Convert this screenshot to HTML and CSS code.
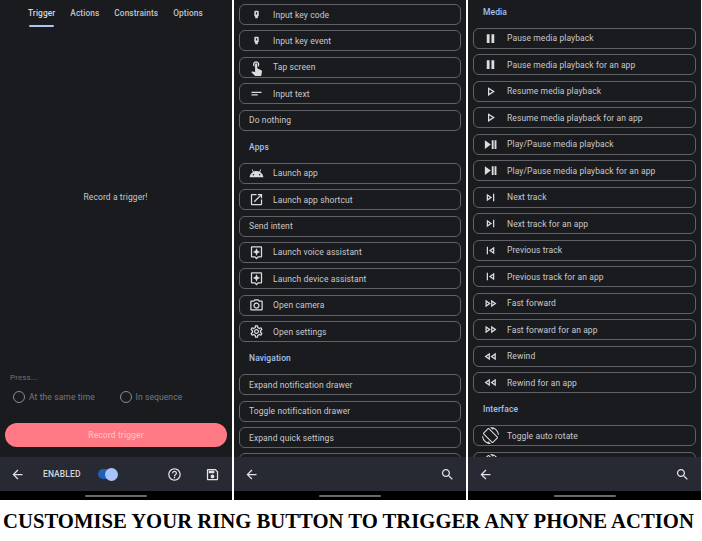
FILE: index.html
```html
<!DOCTYPE html>
<html lang="en">
<head>
    <meta charset="UTF-8">
    <meta name="viewport" content="width=device-width, initial-scale=1.0">
    <title>Customise your ring button</title>
    <link rel="stylesheet" href="styles.css">
</head>
<body>
    <!-- icon sprite -->
    <svg class="sprite" xmlns="http://www.w3.org/2000/svg">
        <symbol id="i-key" viewBox="0 0 24 24"><path fill-rule="evenodd" d="M10 6h4a1.500 1.500 0 0 1 1.500 1.500V14l-1.500 1.500V18h-4v-2.500L8.500 14V7.500A1.500 1.500 0 0 1 10 6zM11 8.500v3.500h2V8.500z"/></symbol>
        <symbol id="i-touch" viewBox="0 0 24 24"><path d="M9 11.240V7.500C9 6.120 10.120 5 11.500 5S14 6.120 14 7.500v3.740c1.210-.81 2-2.180 2-3.740C16 5.010 13.990 3 11.500 3S7 5.010 7 7.500c0 1.560.79 2.930 2 3.740zm9.840 4.630l-4.540-2.260c-.17-.07-.35-.11-.54-.11H13v-6c0-.83-.67-1.500-1.500-1.500S10 6.670 10 7.500v10.740l-3.430-.72c-.08-.01-.15-.03-.24-.03-.31 0-.59.13-.79.33l-.79.8 4.940 4.940c.27.27.65.44 1.060.44h6.790c.75 0 1.330-.55 1.440-1.280l.75-5.270c.01-.07.02-.14.02-.2 0-.62-.38-1.160-.91-1.380z"/></symbol>
        <symbol id="i-text" viewBox="0 0 24 24"><path d="M4 9h16v2H4zm0 4h10v2H4z"/></symbol>
        <symbol id="i-android" viewBox="0 0 24 24"><path d="M17.600 9.480l1.840-3.180c.16-.31.04-.69-.26-.85-.29-.15-.65-.06-.83.22l-1.880 3.240c-2.860-1.210-6.080-1.210-8.940 0L5.650 5.670c-.19-.29-.58-.38-.87-.2-.28.18-.37.54-.22.83L6.400 9.480C3.300 11.250 1.280 14.440 1 18h22c-.28-3.560-2.300-6.750-5.400-8.520zM7 15.250c-.69 0-1.250-.56-1.250-1.250s.56-1.250 1.250-1.250 1.250.56 1.250 1.250-.56 1.250-1.250 1.250zm10 0c-.69 0-1.250-.56-1.250-1.250s.56-1.250 1.250-1.250 1.250.56 1.250 1.250-.56 1.250-1.250 1.250z"/></symbol>
        <symbol id="i-shortcut" viewBox="0 0 24 24"><path d="M19 19H5V5h7V3H5c-1.110 0-2 .9-2 2v14c0 1.100.89 2 2 2h14c1.100 0 2-.9 2-2v-7h-2v7zM14 3v2h3.590l-9.830 9.830 1.410 1.410L19 6.410V10h2V3h-7z"/></symbol>
        <symbol id="i-assistant" viewBox="0 0 24 24"><path d="M19 2H5c-1.100 0-2 .9-2 2v14c0 1.100.9 2 2 2h4l3 3 3-3h4c1.100 0 2-.9 2-2V4c0-1.100-.9-2-2-2zm0 16h-4.830L12 20.170 9.830 18H5V4h14v14zm-7-1l1.880-4.120L18 11l-4.120-1.880L12 5l-1.880 4.120L6 11l4.120 1.880z"/></symbol>
        <symbol id="i-camera" viewBox="0 0 24 24"><path d="M20 4h-3.170L15 2H9L7.170 4H4c-1.100 0-2 .9-2 2v12c0 1.100.9 2 2 2h16c1.100 0 2-.9 2-2V6c0-1.100-.9-2-2-2zm0 14H4V6h4.050l1.830-2h4.240l1.830 2H20v12zM12 7c-2.760 0-5 2.240-5 5s2.240 5 5 5 5-2.240 5-5-2.240-5-5-5zm0 8c-1.650 0-3-1.350-3-3s1.350-3 3-3 3 1.350 3 3-1.350 3-3 3z"/></symbol>
        <symbol id="i-settings" viewBox="0 0 24 24"><path d="M19.430 12.980c.04-.32.07-.64.07-.98 0-.34-.03-.66-.07-.98l2.110-1.650c.19-.15.24-.42.12-.64l-2-3.460c-.09-.16-.26-.25-.44-.25-.06 0-.12.01-.17.03l-2.490 1c-.52-.4-1.080-.73-1.690-.98l-.38-2.650C14.460 2.180 14.250 2 14 2h-4c-.25 0-.46.18-.49.42l-.38 2.650c-.61.25-1.170.59-1.690.98l-2.490-1c-.06-.02-.12-.03-.18-.03-.17 0-.34.09-.43.25l-2 3.460c-.13.22-.07.49.12.64l2.110 1.650c-.04.32-.07.65-.07.98 0 .33.03.66.07.98l-2.110 1.650c-.19.15-.24.42-.12.64l2 3.460c.09.16.26.25.44.25.06 0 .12-.01.17-.03l2.490-1c.52.4 1.080.73 1.690.98l.38 2.650c.03.24.24.42.49.42h4c.25 0 .46-.18.49-.42l.38-2.650c.61-.25 1.170-.59 1.690-.98l2.490 1c.06.02.12.03.18.03.17 0 .34-.09.43-.25l2-3.460c.12-.22.07-.49-.12-.64l-2.110-1.650zm-1.980-1.710c.04.31.05.52.05.73 0 .21-.02.43-.05.73l-.14 1.130.89.7 1.080.84-.7 1.210-1.270-.51-1.040-.42-.9.68c-.43.32-.84.56-1.250.73l-1.060.43-.16 1.130-.2 1.350h-1.400l-.19-1.350-.16-1.130-1.060-.43c-.43-.18-.83-.41-1.230-.71l-.91-.7-1.060.43-1.270.51-.7-1.210 1.080-.84.89-.7-.14-1.130c-.03-.31-.05-.54-.05-.74s.02-.43.05-.73l.14-1.130-.89-.7-1.080-.84.7-1.210 1.270.51 1.040.42.9-.68c.43-.32.84-.56 1.250-.73l1.060-.43.16-1.130.2-1.350h1.390l.19 1.350.16 1.130 1.060.43c.43.18.83.41 1.230.71l.91.7 1.060-.43 1.270-.51.7 1.210-1.070.85-.89.7.14 1.130zM12 8c-2.210 0-4 1.790-4 4s1.790 4 4 4 4-1.790 4-4-1.790-4-4-4zm0 6c-1.100 0-2-.9-2-2s.9-2 2-2 2 .9 2 2-.9 2-2 2z"/></symbol>
        <symbol id="i-pause" viewBox="0 0 24 24"><path d="M6 19h4.500V5H6v14zm7.500-14v14H18V5h-4.500z"/></symbol>
        <symbol id="i-play" viewBox="0 0 24 24"><path d="M10 8.640L15.270 12 10 15.360V8.640M8 5v14l11-7L8 5z"/></symbol>
        <symbol id="i-playpause" viewBox="0 0 24 24"><path d="M3 5v14l9.500-7zM14 5h3v14h-3zM18.500 5h3v14h-3z"/></symbol>
        <symbol id="i-next" viewBox="0 0 24 24"><path d="M6 18l8.500-6L6 6v12zM8 9.860L11.030 12 8 14.140V9.860zM16 6h2v12h-2z"/></symbol>
        <symbol id="i-prev" viewBox="0 0 24 24"><path d="M6 6h2v12H6zm3.500 6l8.500 6V6l-8.500 6zm6.500 2.140L12.970 12 16 9.860v4.280z"/></symbol>
        <symbol id="i-forward" viewBox="0 0 24 24"><path d="M4 18l8.500-6L4 6v12zm2-8.140L9.030 12 6 14.140V9.860zM21.500 12L13 6v12l8.500-6zM15 9.860L18.030 12 15 14.140V9.860z"/></symbol>
        <symbol id="i-rewind" viewBox="0 0 24 24"><path d="M11 18V6l-8.500 6 8.500 6zm-2-3.860L5.970 12 9 9.860v4.280zM20.500 18V6L12 12l8.500 6zm-2-3.860L15.470 12l3.030-2.140v4.280z"/></symbol>
        <symbol id="i-rotate" viewBox="0 0 24 24"><path d="M16.480 2.520c3.270 1.550 5.610 4.720 5.970 8.480h1.500C23.440 4.840 18.290 0 12 0l-.66.03 3.810 3.810 1.330-1.320zm-6.250-.77c-.59-.59-1.540-.59-2.120 0L1.750 8.110c-.59.59-.59 1.540 0 2.120l12.020 12.020c.59.59 1.540.59 2.120 0l6.360-6.360c.59-.59.59-1.540 0-2.120L10.230 1.750zm4.600 19.440L2.810 9.170l6.360-6.360 12.020 12.020-6.360 6.360zm-7.310.29C4.250 19.940 1.910 16.760 1.550 13H.05C.56 19.160 5.710 24 12 24l.66-.03-3.810-3.810-1.330 1.320z"/></symbol>
        <symbol id="i-back" viewBox="0 0 24 24"><path d="M20 11H7.830l5.590-5.590L12 4l-8 8 8 8 1.410-1.410L7.830 13H20v-2z"/></symbol>
        <symbol id="i-search" viewBox="0 0 24 24"><path d="M15.500 14h-.79l-.28-.27C15.410 12.590 16 11.110 16 9.500 16 5.910 13.090 3 9.500 3S3 5.910 3 9.500 5.910 16 9.500 16c1.610 0 3.090-.59 4.230-1.570l.27.28v.79l5 4.990L20.490 19l-4.990-5zm-6 0C7.010 14 5 11.990 5 9.500S7.010 5 9.500 5 14 7.010 14 9.500 11.990 14 9.500 14z"/></symbol>
        <symbol id="i-help" viewBox="0 0 24 24"><path d="M11 18h2v-2h-2v2zm1-16C6.480 2 2 6.480 2 12s4.480 10 10 10 10-4.480 10-10S17.520 2 12 2zm0 18c-4.410 0-8-3.590-8-8s3.590-8 8-8 8 3.590 8 8-3.590 8-8 8zm0-14c-2.210 0-4 1.790-4 4h2c0-1.100.9-2 2-2s2 .9 2 2c0 2-3 1.750-3 5h2c0-2.250 3-2.500 3-5 0-2.210-1.790-4-4-4z"/></symbol>
        <symbol id="i-save" viewBox="0 0 24 24"><path d="M17 3H5c-1.110 0-2 .9-2 2v14c0 1.100.89 2 2 2h14c1.100 0 2-.9 2-2V7l-4-4zm2 16H5V5h11.170L19 7.830V19zm-7-7c-1.660 0-3 1.340-3 3s1.340 3 3 3 3-1.340 3-3-1.340-3-3-3zM6 6h9v4H6z"/></symbol>
    </svg>

    <div class="phones">
        <!-- trigger screen -->
        <section class="phone">
            <div class="screen">
                <nav class="tabs">
                    <span class="tab tab-active">Trigger</span>
                    <span class="tab">Actions</span>
                    <span class="tab">Constraints</span>
                    <span class="tab">Options</span>
                </nav>
                <p class="empty">Record a trigger!</p>
                <p class="press">Press...</p>
                <div class="radios">
                    <span class="radio radio-first"><i class="radio-dot"></i>At the same time</span>
                    <span class="radio"><i class="radio-dot"></i>In sequence</span>
                </div>
                <button class="record" type="button">Record trigger</button>
            </div>
            <div class="bar">
                <svg class="bar-icon"><use href="#i-back"/></svg>
                <span class="enabled">ENABLED</span>
                <span class="switch"><i class="switch-thumb"></i></span>
                <svg class="bar-icon help-icon"><use href="#i-help"/></svg>
                <svg class="bar-icon save-icon"><use href="#i-save"/></svg>
            </div>
            <div class="home"><i class="home-line"></i></div>
        </section>

        <!-- action list -->
        <section class="phone">
            <div class="screen list list-actions">
                <div class="row"><svg class="icon"><use href="#i-key"/></svg>Input key code</div>
                <div class="row"><svg class="icon"><use href="#i-key"/></svg>Input key event</div>
                <div class="row"><svg class="icon icon-big"><use href="#i-touch"/></svg>Tap screen</div>
                <div class="row"><svg class="icon"><use href="#i-text"/></svg>Input text</div>
                <div class="row">Do nothing</div>
                <h3 class="label">Apps</h3>
                <div class="row"><svg class="icon"><use href="#i-android"/></svg>Launch app</div>
                <div class="row"><svg class="icon"><use href="#i-shortcut"/></svg>Launch app shortcut</div>
                <div class="row">Send intent</div>
                <div class="row"><svg class="icon"><use href="#i-assistant"/></svg>Launch voice assistant</div>
                <div class="row"><svg class="icon"><use href="#i-assistant"/></svg>Launch device assistant</div>
                <div class="row"><svg class="icon"><use href="#i-camera"/></svg>Open camera</div>
                <div class="row"><svg class="icon"><use href="#i-settings"/></svg>Open settings</div>
                <h3 class="label">Navigation</h3>
                <div class="row">Expand notification drawer</div>
                <div class="row">Toggle notification drawer</div>
                <div class="row">Expand quick settings</div>
                <div class="row"></div>
            </div>
            <div class="bar">
                <svg class="bar-icon"><use href="#i-back"/></svg>
                <svg class="bar-icon search-icon"><use href="#i-search"/></svg>
            </div>
            <div class="home"><i class="home-line"></i></div>
        </section>

        <!-- media list -->
        <section class="phone phone-wide">
            <div class="screen list list-media">
                <h3 class="label">Media</h3>
                <div class="row"><svg class="icon"><use href="#i-pause"/></svg>Pause media playback</div>
                <div class="row"><svg class="icon"><use href="#i-pause"/></svg>Pause media playback for an app</div>
                <div class="row"><svg class="icon"><use href="#i-play"/></svg>Resume media playback</div>
                <div class="row"><svg class="icon"><use href="#i-play"/></svg>Resume media playback for an app</div>
                <div class="row"><svg class="icon"><use href="#i-playpause"/></svg>Play/Pause media playback</div>
                <div class="row"><svg class="icon"><use href="#i-playpause"/></svg>Play/Pause media playback for an app</div>
                <div class="row"><svg class="icon"><use href="#i-next"/></svg>Next track</div>
                <div class="row"><svg class="icon"><use href="#i-next"/></svg>Next track for an app</div>
                <div class="row"><svg class="icon"><use href="#i-prev"/></svg>Previous track</div>
                <div class="row"><svg class="icon"><use href="#i-prev"/></svg>Previous track for an app</div>
                <div class="row"><svg class="icon"><use href="#i-forward"/></svg>Fast forward</div>
                <div class="row"><svg class="icon"><use href="#i-forward"/></svg>Fast forward for an app</div>
                <div class="row"><svg class="icon"><use href="#i-rewind"/></svg>Rewind</div>
                <div class="row"><svg class="icon"><use href="#i-rewind"/></svg>Rewind for an app</div>
                <h3 class="label">Interface</h3>
                <div class="row"><svg class="icon icon-big"><use href="#i-rotate"/></svg>Toggle auto rotate</div>
                <div class="row"><svg class="icon icon-big"><use href="#i-rotate"/></svg></div>
            </div>
            <div class="bar">
                <svg class="bar-icon"><use href="#i-back"/></svg>
                <svg class="bar-icon search-icon"><use href="#i-search"/></svg>
            </div>
            <div class="home"><i class="home-line"></i></div>
        </section>
    </div>

    <h1 class="caption">CUSTOMISE YOUR RING BUTTON TO TRIGGER ANY PHONE ACTION</h1>
</body>
</html>
```

FILE: styles.css
```css
* {
    box-sizing: border-box;
}
body {
    margin: 0;
    background-color: #fff;
    font-family: Roboto, Arial, sans-serif;
    overflow: hidden;
}
.sprite {
    display: none;
}
.phones {
    display: flex;
    gap: 2px;
}
.phone {
    width: 232px;
    height: 500px;
    display: flex;
    flex-direction: column;
    background-color: #1a1b1f;
    color: #c9c9cb;
    font-size: 8.5px;
    letter-spacing: 0.1px;
}
.phone-wide {
    width: 233px;
}
.screen {
    flex: 1;
    min-height: 0;
    overflow: hidden;
    display: flex;
    flex-direction: column;
}

/* Tabs */
.tabs {
    display: flex;
    gap: 15px;
    padding: 8px 0 0 28px;
    flex-shrink: 0;
}
.tab {
    height: 19px;
    font-size: 8.3px;
    font-weight: 500;
    color: #c4c4c6;
}
.tab-active {
    position: relative;
    color: #d8d8da;
}
.tab-active::after {
    content: "";
    position: absolute;
    left: 1px;
    right: 1px;
    bottom: 0;
    height: 2px;
    border-radius: 1px;
    background-color: #a9c5f0;
}
.empty {
    margin: 0;
    flex: 1;
    display: flex;
    align-items: center;
    justify-content: center;
    padding: 0 1px 6px 0;
}
.press {
    margin: 0 0 8px 10px;
    color: #6f7073;
    font-size: 8px;
}
.radios {
    display: flex;
    padding-left: 13px;
    color: #77787b;
}
.radio {
    display: flex;
    align-items: center;
    gap: 4px;
    height: 13px;
}
.radio-first {
    width: 106.5px;
}
.radio-dot {
    width: 12px;
    height: 12px;
    border: 1px solid #8b8c8f;
    border-radius: 50%;
}
.record {
    margin: 20px 5px 10px;
    height: 24px;
    border: none;
    border-radius: 12px;
    background-color: #ff7a85;
    color: #ffb9bd;
    font-family: inherit;
    font-size: 8.5px;
    font-weight: 500;
    letter-spacing: 0.1px;
    flex-shrink: 0;
}

/* Action lists */
.list {
    padding: 0 5px;
}
.list-actions {
    gap: 5.45px;
    padding-top: 4px;
}
.list-media {
    gap: 5.5px;
    padding-top: 1px;
}
.row {
    height: 21px;
    flex-shrink: 0;
    display: flex;
    align-items: center;
    padding-left: 9px;
    border: 1px solid #616265;
    border-radius: 6px;
}
.icon {
    width: 15px;
    height: 15px;
    margin-right: 9px;
    fill: #dcdcde;
    flex-shrink: 0;
}
.icon-big {
    width: 17px;
    height: 17px;
    margin-left: -1px;
    margin-right: 8px;
}
.label {
    margin: 0;
    height: 21px;
    flex-shrink: 0;
    display: flex;
    align-items: center;
    padding-left: 10px;
    font-size: 8.5px;
    font-weight: 500;
    color: #a5c1ee;
}

/* Bottom bar */
.bar {
    height: 34px;
    flex-shrink: 0;
    display: flex;
    align-items: center;
    padding: 0 10px 0 9.5px;
    background-color: #272a33;
}
.bar-icon {
    width: 15px;
    height: 15px;
    fill: #e2e2e4;
    flex-shrink: 0;
}
.enabled {
    margin-left: 18.5px;
    font-weight: 500;
    font-size: 8.5px;
    color: #d6d6d8;
}
.switch {
    position: relative;
    width: 19px;
    height: 10px;
    margin-left: 17px;
    border-radius: 5px;
    background-color: #1f5fb4;
}
.switch-thumb {
    position: absolute;
    right: -1px;
    top: -1.5px;
    width: 13px;
    height: 13px;
    border-radius: 50%;
    background-color: #a8c3fb;
}
.help-icon {
    margin-left: 50.5px;
}
.save-icon {
    margin-left: 23px;
}
.search-icon {
    margin-left: auto;
    margin-right: 1px;
}
.home {
    height: 9px;
    flex-shrink: 0;
    display: flex;
    align-items: center;
    justify-content: center;
    background-color: #000;
}
.home-line {
    width: 62px;
    height: 2px;
    border-radius: 1px;
    background-color: #6a6a6c;
}

/* Caption */
.caption {
    margin: 9px 0 0 3px;
    font-family: "Liberation Serif", "Times New Roman", serif;
    font-size: 20.7px;
    font-weight: 700;
    line-height: 24px;
    color: #000;
    white-space: nowrap;
}
```
